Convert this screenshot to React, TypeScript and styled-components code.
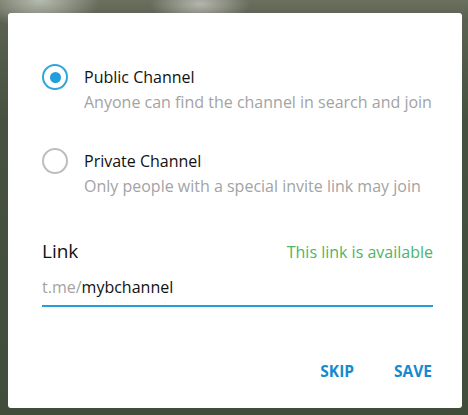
import React, { useState } from "react";
import styled, { createGlobalStyle } from "styled-components";

const GlobalStyle = createGlobalStyle`
  html, body {
    margin: 0;
    padding: 0;
  }
  body {
    width: 468px;
    height: 415px;
    overflow: hidden;
    font-family: "Open Sans", "Noto Sans", sans-serif;
    background:
      radial-gradient(ellipse 60px 30px at 40px 0px, rgba(190, 195, 185, 0.9), transparent),
      radial-gradient(ellipse 50px 20px at 200px 4px, rgba(200, 200, 195, 0.8), transparent),
      linear-gradient(180deg, #6b6f5e 0px, #5a6150 20px, #46523f 120px, #3f4d3a 415px);
  }
`;

const Backdrop = styled.div`
  padding: 13px 6px 7px 8px;
`;

const Dialog = styled.div`
  width: 454px;
  height: 395px;
  box-sizing: border-box;
  background: #ffffff;
  border-radius: 3px;
  padding: 53px 29px 0 34px;
  display: flex;
  flex-direction: column;
`;

const Options = styled.div`
  display: flex;
  flex-direction: column;
  gap: 37px;
`;

const OptionRow = styled.label`
  display: flex;
  align-items: flex-start;
  gap: 16px;
  cursor: pointer;
`;

const RadioCircle = styled.span<{ $checked: boolean }>`
  width: 26px;
  height: 26px;
  margin-top: -2px;
  box-sizing: border-box;
  border-radius: 50%;
  border: 2.5px solid ${(p) => (p.$checked ? "#2fa5dc" : "#bdbdbd")};
  display: flex;
  align-items: center;
  justify-content: center;
  flex-shrink: 0;

  &::after {
    content: "";
    width: 11px;
    height: 11px;
    border-radius: 50%;
    background: ${(p) => (p.$checked ? "#1ea0e0" : "transparent")};
  }
`;

const OptionText = styled.div`
  display: flex;
  flex-direction: column;
  gap: 3px;
  white-space: nowrap;
`;

const OptionTitle = styled.div`
  font-size: 16px;
  line-height: 22px;
  color: #111111;
`;

const OptionSub = styled.div`
  font-size: 16px;
  line-height: 22px;
  color: #a3a3a3;
`;

const LinkHeader = styled.div`
  margin-top: 41px;
  display: flex;
  justify-content: space-between;
  align-items: baseline;
`;

const LinkLabel = styled.div`
  font-size: 19px;
  line-height: 26px;
  color: #111111;
`;

const LinkStatus = styled.div`
  font-size: 16px;
  line-height: 22px;
  color: #4cb56a;
`;

const InputField = styled.div`
  margin-top: 9px;
  display: flex;
  align-items: center;
  height: 28px;
  border-bottom: 2px solid #229fd7;
  padding-bottom: 4px;
  font-size: 16px;
`;

const Prefix = styled.span`
  color: #a3a3a3;
`;

const Value = styled.span`
  color: #111111;
`;

const Actions = styled.div`
  margin-top: auto;
  margin-bottom: 26px;
  display: flex;
  justify-content: flex-end;
  gap: 40px;
  padding-right: 1px;
`;

const ActionButton = styled.button`
  background: none;
  border: none;
  padding: 0;
  font-family: "Open Sans", "Noto Sans", sans-serif;
  font-size: 15.5px;
  font-weight: 700;
  line-height: 22px;
  color: #168acd;
  cursor: pointer;
`;

const options = [
  {
    id: "public",
    title: "Public Channel",
    sub: "Anyone can find the channel in search and join",
  },
  {
    id: "private",
    title: "Private Channel",
    sub: "Only people with a special invite link may join",
  },
];

const App: React.FC = () => {
  const [selected, setSelected] = useState("public");

  return (
    <>
      <GlobalStyle />
      <Backdrop>
        <Dialog>
          <Options>
            {options.map((o) => (
              <OptionRow key={o.id} onClick={() => setSelected(o.id)}>
                <RadioCircle $checked={selected === o.id} />
                <OptionText>
                  <OptionTitle>{o.title}</OptionTitle>
                  <OptionSub>{o.sub}</OptionSub>
                </OptionText>
              </OptionRow>
            ))}
          </Options>
          <LinkHeader>
            <LinkLabel>Link</LinkLabel>
            <LinkStatus>This link is available</LinkStatus>
          </LinkHeader>
          <InputField>
            <Prefix>t.me/</Prefix>
            <Value>mybchannel</Value>
          </InputField>
          <Actions>
            <ActionButton>SKIP</ActionButton>
            <ActionButton>SAVE</ActionButton>
          </Actions>
        </Dialog>
      </Backdrop>
    </>
  );
};

export default App;
